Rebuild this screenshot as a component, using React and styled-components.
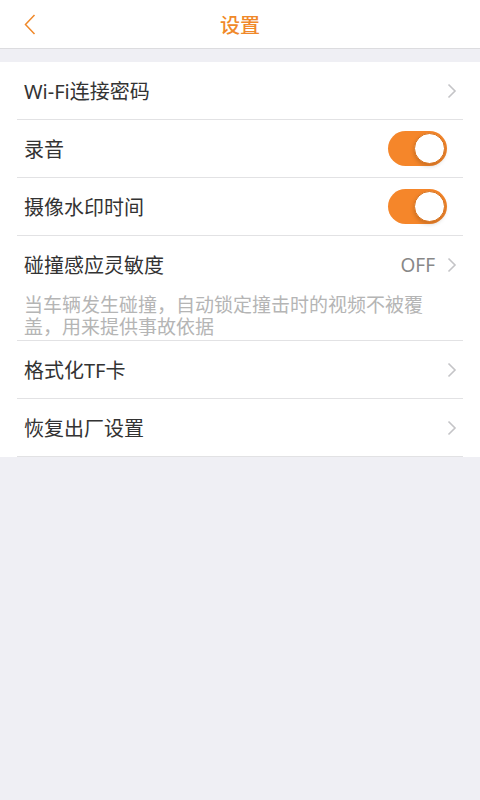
import { useState } from "react";
import styled, { createGlobalStyle } from "styled-components";

const GlobalStyle = createGlobalStyle`
  html, body {
    margin: 0;
    padding: 0;
    background: #efeff4;
    font-family: "Noto Sans", "Noto Sans CJK SC", sans-serif;
  }
  #root {
    min-height: 800px;
    background: #efeff4;
  }
`;

const Header = styled.header`
  height: 48px;
  background: #fff;
  border-bottom: 1px solid #dcdcdf;
  display: flex;
  align-items: center;
  justify-content: center;
  position: relative;
`;

const BackButton = styled.button`
  position: absolute;
  left: 18px;
  top: 11px;
  width: 24px;
  height: 26px;
  padding: 0;
  border: none;
  background: none;
  display: flex;
  align-items: center;
  justify-content: center;
`;

const Title = styled.h1`
  margin: 0;
  font-size: 20px;
  font-weight: 500;
  color: #f0892a;
  font-family: "Noto Sans CJK SC", sans-serif;
`;

const List = styled.ul`
  list-style: none;
  margin: 13px 0 0;
  padding: 0;
  background: #fff;
`;

const Item = styled.li`
  margin: 0 17px;
  border-bottom: 1px solid #e2e2e4;
`;

const Row = styled.div`
  height: 57px;
  padding: 0 6px 0 7px;
  display: flex;
  align-items: center;
  font-size: 20px;
  color: #333;
  font-family: "Noto Sans", "Noto Sans CJK SC", sans-serif;
`;

const Label = styled.span`
  flex: 1;
`;

const Value = styled.span`
  font-size: 19px;
  color: #888;
  margin-right: 12px;
`;

const Note = styled.p`
  margin: 0;
  padding: 0 32px 3px 7px;
  font-size: 19px;
  line-height: 22px;
  color: #b5b5b5;
  font-family: "Noto Sans CJK SC", sans-serif;
`;

const Track = styled.button`
  width: 59px;
  height: 35px;
  margin-right: 10px;
  padding: 0;
  border: none;
  border-radius: 18px;
  background: ${(p) => (p.on ? "#f5862a" : "#e5e5ea")};
  display: flex;
  align-items: center;
  justify-content: ${(p) => (p.on ? "flex-end" : "flex-start")};
  cursor: pointer;
`;

const Knob = styled.span`
  width: 31px;
  height: 31px;
  margin: 0 2px;
  border-radius: 50%;
  background: #fff;
  box-sizing: border-box;
  border: 1px solid ${(p) => (p.on ? "#d9741f" : "#ddd")};
  box-shadow: 0 2px 4px rgba(0, 0, 0, 0.18);
`;

const Chevron = () => (
  <svg width="10" height="16" viewBox="0 0 10 16">
    <path d="M1.5 1.5 L8 8 L1.5 14.5" fill="none" stroke="#c4c4c7" strokeWidth="1.6" />
  </svg>
);

const Toggle = ({ on, onClick }) => (
  <Track on={on ? 1 : 0} onClick={onClick}>
    <Knob on={on ? 1 : 0} />
  </Track>
);

export default function App() {
  const [audio, setAudio] = useState(true);
  const [stamp, setStamp] = useState(true);

  return (
    <>
      <GlobalStyle />
      <Header>
        <BackButton>
          <svg width="12" height="21" viewBox="0 0 12 21">
            <path d="M10.5 1 L1.5 10.5 L10.5 20" fill="none" stroke="#f0892a" strokeWidth="1.5" />
          </svg>
        </BackButton>
        <Title>设置</Title>
      </Header>
      <List>
        <Item>
          <Row>
            <Label>Wi-Fi连接密码</Label>
            <Chevron />
          </Row>
        </Item>
        <Item>
          <Row>
            <Label>录音</Label>
            <Toggle on={audio} onClick={() => setAudio(!audio)} />
          </Row>
        </Item>
        <Item>
          <Row>
            <Label>摄像水印时间</Label>
            <Toggle on={stamp} onClick={() => setStamp(!stamp)} />
          </Row>
        </Item>
        <Item>
          <Row>
            <Label>碰撞感应灵敏度</Label>
            <Value>OFF</Value>
            <Chevron />
          </Row>
          <Note>当车辆发生碰撞，自动锁定撞击时的视频不被覆盖，用来提供事故依据</Note>
        </Item>
        <Item>
          <Row>
            <Label>格式化TF卡</Label>
            <Chevron />
          </Row>
        </Item>
        <Item>
          <Row>
            <Label>恢复出厂设置</Label>
            <Chevron />
          </Row>
        </Item>
      </List>
    </>
  );
}
